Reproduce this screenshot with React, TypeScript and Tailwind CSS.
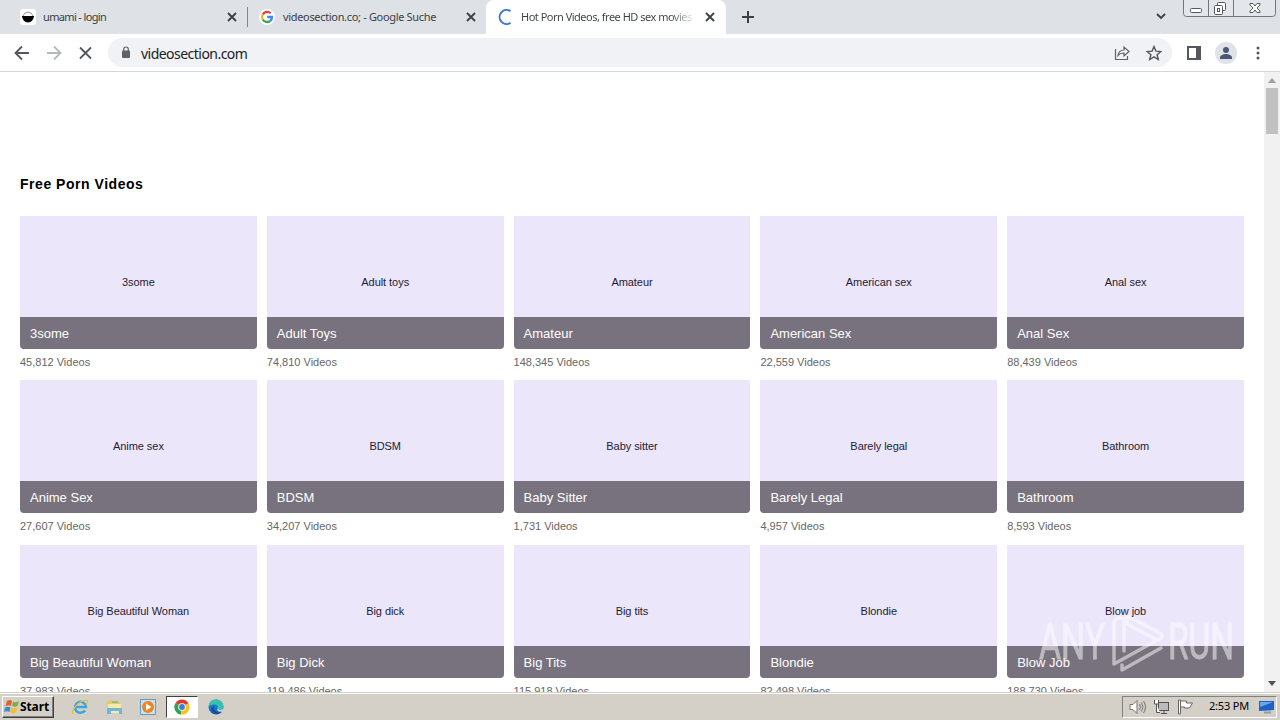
import type { ReactNode } from "react";
import clsx from "clsx";

type Category = {
	alt: string;
	title: string;
	count: string;
};

const categories: Category[] = [
	{ alt: "3some", title: "3some", count: "45,812" },
	{ alt: "Adult toys", title: "Adult Toys", count: "74,810" },
	{ alt: "Amateur", title: "Amateur", count: "148,345" },
	{ alt: "American sex", title: "American Sex", count: "22,559" },
	{ alt: "Anal sex", title: "Anal Sex", count: "88,439" },
	{ alt: "Anime sex", title: "Anime Sex", count: "27,607" },
	{ alt: "BDSM", title: "BDSM", count: "34,207" },
	{ alt: "Baby sitter", title: "Baby Sitter", count: "1,731" },
	{ alt: "Barely legal", title: "Barely Legal", count: "4,957" },
	{ alt: "Bathroom", title: "Bathroom", count: "8,593" },
	{ alt: "Big Beautiful Woman", title: "Big Beautiful Woman", count: "37,983" },
	{ alt: "Big dick", title: "Big Dick", count: "119,486" },
	{ alt: "Big tits", title: "Big Tits", count: "115,918" },
	{ alt: "Blondie", title: "Blondie", count: "82,498" },
	{ alt: "Blow job", title: "Blow Job", count: "188,730" },
];

function CloseIcon() {
	return (
		<svg className="size-[10px] shrink-0" viewBox="0 0 10 10" stroke="#3c4043" strokeWidth="1.8">
			<path d="M1 1l8 8M9 1L1 9" />
		</svg>
	);
}

function BowlIcon() {
	return (
		<svg className="size-4 shrink-0" viewBox="0 0 16 16">
			<rect width="16" height="16" rx="3" fill="#fff" />
			<path d="M3 7a5.2 5.2 0 0 1 10 0" fill="none" stroke="#777" strokeWidth=".8" />
			<path d="M2 7h12a6 6.500 0 0 1-12 0z" fill="#000" />
		</svg>
	);
}

function GoogleIcon() {
	return (
		<svg className="size-4 shrink-0" viewBox="0 0 16 16">
			<circle cx="8" cy="8" r="8" fill="#fff" />
			<g fill="none" strokeWidth="2.3">
				<path d="M11.7 4.3A5 5 0 0 0 3.7 5.5" stroke="#ea4335" />
				<path d="M3.7 5.5a5 5 0 0 0 0 5" stroke="#fbbc05" />
				<path d="M3.7 10.5a5 5 0 0 0 7.6 1.3" stroke="#34a853" />
				<path d="M11.3 11.8A5 5 0 0 0 13 8H8.2" stroke="#4285f4" />
			</g>
		</svg>
	);
}

function WindowButtons() {
	return (
		<svg className="h-[17px] w-[93px]" viewBox="0 0 93 17" fill="none" stroke="#74767d">
			<path d="M.5 0v13.500q0 3 3 3h86q3 0 3-3V0M25.500 0v16M50.500 0v16" fill="#e3e6eb" />
			<rect x="7.500" y="8.500" width="11" height="4" rx="1" fill="#fff" stroke="#55585e" />
			<rect x="34.500" y="2.500" width="8" height="8" rx="1" fill="#fff" stroke="#55585e" />
			<rect x="31.500" y="5.500" width="8" height="9" rx="1" fill="#fff" stroke="#55585e" />
			<rect x="34.500" y="8.500" width="2" height="3" stroke="#55585e" />
			<path d="M67 3.500h3l2 2.500 2-2.500h3v1.500l-3 3 3 3v1.500h-3l-2-2.500-2 2.500h-3v-1.500l3-3-3-3z" fill="#fff" stroke="#55585e" />
		</svg>
	);
}

function TabStrip() {
	return (
		<div className="flex h-[34px] bg-[#dee1e6] text-[11px] text-[#3c4043]">
			<div className="flex w-[247px] items-center pl-5 pr-[10px]">
				<BowlIcon />
				<span className="ml-[7px] flex-1 tracking-[-0.65px]">umami - login</span>
				<CloseIcon />
			</div>
			<div className="flex w-[239px] items-center rounded-br-lg">
				<div className="h-5 w-px bg-[#80848b]" />
				<div className="ml-[11px] flex">
					<GoogleIcon />
				</div>
				<span className="ml-2 flex-1 tracking-[-0.33px] whitespace-nowrap">videosection.co; - Google Suche</span>
				<div className="mr-[10px]">
					<CloseIcon />
				</div>
			</div>
			<div className="flex w-[240px] items-center rounded-t-lg bg-white pl-3 pr-[11px]">
				<svg className="size-4 shrink-0" viewBox="0 0 16 16" fill="none" stroke="#3b78d0" strokeWidth="2">
					<path d="M12.500 2.200A7 7 0 1 0 12.500 13.800" />
				</svg>
				<span className="ml-[7px] w-[175px] overflow-hidden bg-linear-to-r from-[#3c4043] from-85% to-transparent bg-clip-text tracking-[-0.5px] whitespace-nowrap text-transparent">
					Hot Porn Videos, free HD sex movies
				</span>
				<div className="ml-auto">
					<CloseIcon />
				</div>
			</div>
			<svg className="mt-[11px] ml-4 size-3" viewBox="0 0 12 12" stroke="#3c4043" strokeWidth="2">
				<path d="M6 0v12M0 6h12" />
			</svg>
			<svg className="mt-[13px] ml-auto h-[7px] w-[10px]" viewBox="0 0 10 7" fill="none" stroke="#3c4043" strokeWidth="1.800">
				<path d="M1 1l4 4 4-4" />
			</svg>
			<div className="ml-[17px] mr-1">
				<WindowButtons />
			</div>
		</div>
	);
}

function Toolbar() {
	return (
		<div className="flex h-[38px] items-center border-b border-[#d5d7da] bg-white">
			<svg className="ml-[14px] h-[16px] w-[80px]" viewBox="0 0 80 16" fill="none" strokeWidth="1.800">
				<path d="M15 8H2M8 1.500L1.500 8 8 14.500" stroke="#54575b" />
				<path d="M33 8h13M40 1.500L46.500 8 40 14.500" stroke="#b6b8bb" />
				<path d="M66 2.500l11 11M77 2.500l-11 11" stroke="#54575b" />
			</svg>
			<div className="ml-[14px] flex h-[29px] w-[1064px] items-center rounded-full bg-[#f0f2f5] pl-[13px] pr-[10px]">
				<svg className="h-[13px] w-[10px]" viewBox="0 0 10 13" fill="#5f6368">
					<rect x="1" y="4.500" width="8" height="7.500" rx="1" />
					<path d="M2.700 5V3.300a2.300 2.300 0 0 1 4.600 0V5" fill="none" stroke="#5f6368" strokeWidth="1.200" />
				</svg>
				<span className="mt-px ml-[10px] flex-1 text-[14px] tracking-[-0.53px] text-[#202124]">videosection.com</span>
				<svg className="mr-[16px] size-4" viewBox="0 0 16 16" fill="none" stroke="#5f6368" strokeWidth="1.200">
					<path d="M1.500 4v10.500h12V11" />
					<path d="M4 10.500C4.500 6.500 7 5 10 5V2l5 4.500-5 4.500V8C7.500 8 5.500 8.500 4 10.500z" />
				</svg>
				<svg className="size-4" viewBox="0 0 16 16" fill="none" stroke="#54575b" strokeWidth="1.400">
					<path d="M8 1.500l1.900 4.600 5 .4-3.800 3.200 1.200 4.800L8 11.900l-4.300 2.600 1.200-4.800-3.800-3.200 5-.4z" />
				</svg>
			</div>
			<svg className="ml-[15px] h-[14px] w-[14px]" viewBox="0 0 14 14">
				<rect x="1" y="1" width="12" height="12" fill="#fff" stroke="#54575b" strokeWidth="2" />
				<rect x="9" width="5" height="14" fill="#54575b" />
			</svg>
			<svg className="ml-[14px] size-[22px]" viewBox="0 0 22 22">
				<circle cx="11" cy="11" r="11" fill="#dfe2e7" />
				<circle cx="11" cy="8" r="3" fill="#4a5875" />
				<path d="M5 17v-1.500c0-2 3.500-3.500 6-3.500s6 1.500 6 3.500V17z" fill="#4a5875" />
			</svg>
			<svg className="ml-[19px] h-[14px] w-1" viewBox="0 0 4 14" fill="#54575b">
				<circle cx="2" cy="2" r="1.500" />
				<circle cx="2" cy="7" r="1.500" />
				<circle cx="2" cy="12" r="1.500" />
			</svg>
		</div>
	);
}

function CategoryCard({ alt, title, count }: Category) {
	return (
		<div>
			<div className="flex h-[133px] flex-col overflow-hidden rounded-b-[4px] bg-[#ece6fb]">
				<div className="flex h-[101px] items-center justify-center pt-[31px] text-[11px] tracking-[-0.05px] text-[#221c33]">
					{alt}
				</div>
				<div className="flex h-8 items-center bg-[#78727e] pt-px pl-[10px] text-[13px] text-white">{title}</div>
			</div>
			<div className="mt-[5px] text-[11px] leading-4 text-[#666]">{count} Videos</div>
		</div>
	);
}

function Scrollbar() {
	return (
		<div className="flex w-4 flex-col items-center bg-[#f1f1f1]">
			<svg className="mt-[6px] h-[5px] w-2" viewBox="0 0 8 5" fill="#a0a0a0">
				<path d="M4 0l4 5H0z" />
			</svg>
			<div className="mt-[5px] h-[46px] w-3 bg-[#c1c1c1]" />
			<svg className="mt-auto mb-[6px] h-[5px] w-2" viewBox="0 0 8 5" fill="#505050">
				<path d="M0 0h8L4 5z" />
			</svg>
		</div>
	);
}

function Watermark() {
	return (
		<svg className="absolute top-[536px] left-[1036px] h-[66px] w-[200px]" viewBox="0 0 200 66" opacity=".5">
			<g fill="#fff" stroke="#fff" strokeWidth=".8" fontFamily="Roboto, sans-serif" fontSize="50">
				<text x="3" y="51" textLength="66" lengthAdjust="spacingAndGlyphs">ANY</text>
				<text x="132" y="51" textLength="66" lengthAdjust="spacingAndGlyphs">RUN</text>
			</g>
			<g fill="none" stroke="#fff" strokeWidth="3.500" strokeLinejoin="round" strokeLinecap="round">
				<path d="M88 43V11q-9-3-10 4v41l47-26q3-3-1-5L91 8v8l28 15" />
				<path d="M86 57v5l39-22" />
			</g>
		</svg>
	);
}

function TaskButton({ active, children }: { active?: boolean; children: ReactNode }) {
	return (
		<div
			className={clsx(
				"flex h-[22px] w-8 items-center justify-center",
				active && "border border-t-[#404040] border-r-white border-b-white border-l-[#404040] bg-white"
			)}
		>
			{children}
		</div>
	);
}

function Taskbar() {
	return (
		<div className="flex h-7 items-center border-t border-[#d4d0c8] bg-[#d4d0c8] shadow-[inset_0_1px_0_#fff]">
			<div className="ml-[2px] flex h-[22px] w-[52px] items-center border border-t-white border-r-[#404040] border-b-[#404040] border-l-white pl-px shadow-[inset_-1px_-1px_0_#808080]">
				<svg className="h-4 w-[16px]" viewBox="0 0 16 16">
					<path d="M3 2q3-2 5 0L7 7Q5 5.500 1.500 7z" fill="#e85d28" />
					<path d="M9 2.500q3 1.500 6-.5L13.500 7Q11 8.500 8 7z" fill="#74b443" />
					<path d="M1 8.500q3-1.500 5.500 0L5.500 13Q3 11.500 0 13z" fill="#3c8bd0" />
					<path d="M7.500 8.500q3 1.500 6 0L12 13.500q-3 1.500-6-.5z" fill="#f6bd2c" />
				</svg>
				<span className="text-[12px] font-bold tracking-[-0.1px] text-black">Start</span>
			</div>
			<div className="ml-[10px] flex gap-[2px]">
				<TaskButton>
					<svg className="size-[18px]" viewBox="0 0 18 18" fill="none">
						<path d="M14 12.500A5.500 5.500 0 1 1 15 9H5" stroke="#3da5de" strokeWidth="2.500" />
						<path d="M2 16c-3-2 5-13 13-14 3 0 1 4 0 5" stroke="#edbc3f" strokeWidth="1.200" />
					</svg>
				</TaskButton>
				<TaskButton>
					<svg className="h-[16px] w-[17px]" viewBox="0 0 17 16">
						<path d="M1 2l5-1 1 2h7v11H1z" fill="#e8c967" />
						<path d="M2 5h13v9H2z" fill="#f7e9a8" />
						<path d="M1 14V9h15v6h-3v-3H5v3H1z" fill="#6eb6db" />
						<path d="M6 3h6" stroke="#4bb16a" />
					</svg>
				</TaskButton>
				<TaskButton>
					<svg className="size-4" viewBox="0 0 16 16">
						<rect x=".5" y=".5" width="15" height="15" fill="#c5e3f5" stroke="#659dbf" />
						<circle cx="8" cy="8" r="6" fill="#f18420" />
						<path d="M6 4.500L11.500 8 6 11.500z" fill="#fff" />
					</svg>
				</TaskButton>
				<TaskButton active>
					<svg className="size-4" viewBox="0 0 16 16">
						<path d="M8 8L1.500 4A7.500 7.500 0 0 1 14.500 4.300z" fill="#e3392d" />
						<path d="M8 8L1.500 4A7.500 7.500 0 0 0 7 15.500z" fill="#31a350" />
						<path d="M8 8l6.500-3.700A7.500 7.500 0 0 1 7 15.500z" fill="#fbc21a" />
						<circle cx="8" cy="8" r="3.800" fill="#fff" />
						<circle cx="8" cy="8" r="2.900" fill="#3c7be0" />
					</svg>
				</TaskButton>
				<TaskButton>
					<svg className="size-4" viewBox="0 0 16 16">
						<circle cx="8" cy="8" r="7.500" fill="#1679c5" />
						<path d="M.8 7C1 2 5-.2 9 .6c5 .8 7 5 6.300 7.500C14.500 11 10 11 9.500 9.500c1-2-.5-4-3-4C3.500 5.500 1.500 7 .8 7z" fill="#35c3b0" />
						<path d="M6 7c-1 4 3 7 8 5.500C11 16 6 16 4 13s0-5 2-6z" fill="#174f9c" />
						<path d="M9.500 9.500c1 1.500 4 1.500 6 0l-1 3c-3 1-6-.5-5-3z" fill="#d4d0c8" />
					</svg>
				</TaskButton>
			</div>
			<div className="mr-[3px] ml-auto flex h-[22px] w-[155px] items-center border border-t-[#808080] border-r-white border-b-white border-l-[#808080] pl-[6px]">
				<svg className="h-4 w-[18px]" viewBox="0 0 18 16" fill="#fff" stroke="#737373">
					<path d="M1 5.500h3l4-4v13l-4-4H1z" />
					<path d="M10.500 5q2 3 0 6M12.500 3.500q3 4.500 0 9M14.500 2q4 6 0 12" fill="none" />
				</svg>
				<svg className="ml-[6px] size-4" viewBox="0 0 16 16" fill="#fff" stroke="#555">
					<rect x="5.500" y="3.500" width="10" height="8" fill="#bbb" />
					<path d="M8 14.500h6M11 12v2M1.500 1v4h4V1M3.500 5v8.500H7" />
				</svg>
				<svg className="ml-2 h-4 w-[17px]" viewBox="0 0 17 16" fill="#fff" stroke="#666">
					<path d="M1.500 1h2v14h-2zM3.500 2h6v2h6l-3 5h-5V8h-4z" />
				</svg>
				<span className="ml-[15px] text-[11px] tracking-[-0.2px] whitespace-nowrap text-black">2:53 PM</span>
				<svg className="mr-px ml-auto h-[14px] w-4" viewBox="0 0 16 14">
					<path d="M0 1h15v9l-15 1z" fill="#1e61c4" />
					<path d="M1 2h13L1 7z" fill="#69a9eb" />
					<path d="M5 12.500h7" stroke="#9a9a9a" strokeWidth="2" />
				</svg>
			</div>
		</div>
	);
}

export default function App() {
	return (
		<div className="flex h-[720px] w-[1280px] flex-col overflow-hidden bg-white font-['Noto_Sans',sans-serif]">
			<TabStrip />
			<Toolbar />
			<div className="relative flex h-[620px] overflow-hidden font-['Liberation_Sans',Arial,sans-serif]">
				<div className="flex-1 pt-[101px] pr-5 pl-5">
					<h1 className="h-[43px] text-[14px] leading-[22px] font-bold tracking-[0.53px] text-black">Free Porn Videos</h1>
					<div className="grid grid-cols-5 grid-rows-[164px_165px_165px] gap-x-[10px]">
						{categories.map((category) => (
							<CategoryCard key={category.title} {...category} />
						))}
					</div>
				</div>
				<Scrollbar />
				<Watermark />
			</div>
			<Taskbar />
		</div>
	);
}
